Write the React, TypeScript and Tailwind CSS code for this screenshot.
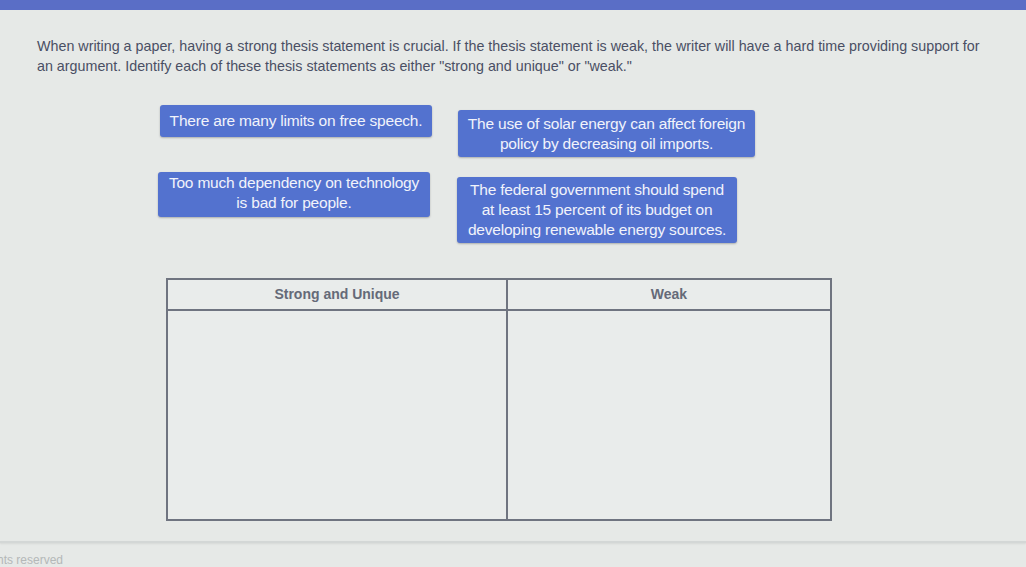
import React from "react";

function Card({ children, className }: { children: React.ReactNode; className: string }) {
  return (
    <div
      className={`flex items-center justify-center rounded-[3px] bg-[#5372cf] text-center text-[15.5px] leading-[20px] tracking-[-0.2px] text-[#f1f3fb] shadow-[0_1px_2px_rgba(0,0,0,0.25)] ${className}`}
    >
      <div>{children}</div>
    </div>
  );
}

export default function App() {
  return (
    <div className="relative flex h-[567px] w-[1026px] flex-col overflow-hidden bg-[#e6e9e7] font-['Liberation_Sans',Arial,sans-serif]">
      <div className="h-[10px] w-full shrink-0 bg-[#5a6ec6]" />
      <div className="px-[37px] pt-[26px] text-[14.3px] leading-[20px] text-[#4a4f64]">
        <p>
          When writing a paper, having a strong thesis statement is crucial. If the thesis statement is weak, the writer will have a hard time providing support for
        </p>
        <p>an argument. Identify each of these thesis statements as either "strong and unique" or "weak."</p>
      </div>

      <div className="mt-[29px] flex items-start pl-[160px]">
        <Card className="h-[32px] w-[272px] px-[3px]">There are many limits on free speech.</Card>
        <Card className="ml-[26px] mt-[5px] h-[47px] w-[297px] px-[3px]">
          The use of solar energy can affect foreign
          <br />
          policy by decreasing oil imports.
        </Card>
      </div>

      <div className="mt-[15px] flex items-start pl-[158px]">
        <Card className="h-[45px] w-[272px] !items-start px-[3px] pt-[1px]">
          Too much dependency on technology
          <br />
          is bad for people.
        </Card>
        <Card className="ml-[27px] mt-[5px] h-[66px] w-[280px] px-[3px]">
          The federal government should spend
          <br />
          at least 15 percent of its budget on
          <br />
          developing renewable energy sources.
        </Card>
      </div>

      <div className="ml-[166px] mt-[35px] grid h-[244px] w-[666px] grid-cols-[340px_1fr] grid-rows-[31px_1fr] border-2 border-[#6f7480] bg-[#e9eceb]">
        <div className="flex items-center justify-center border-b-2 border-r-2 border-[#6f7480] text-[14px] font-bold text-[#656a78]">
          Strong and Unique
        </div>
        <div className="flex items-center justify-center border-b-2 border-[#6f7480] text-[14px] font-bold text-[#656a78]">
          Weak
        </div>
        <div className="border-r-2 border-[#6f7480]" />
        <div />
      </div>

      <div className="mt-[20px] h-[2px] w-full bg-[#d3d7d6] shadow-[0_1px_2px_rgba(0,0,0,0.08)]" />
      <div className="mt-[10px] text-[12px] leading-[14px] text-[#b4b8b8]">
        <span className="-ml-[3px]">hts reserved</span>
      </div>
    </div>
  );
}
